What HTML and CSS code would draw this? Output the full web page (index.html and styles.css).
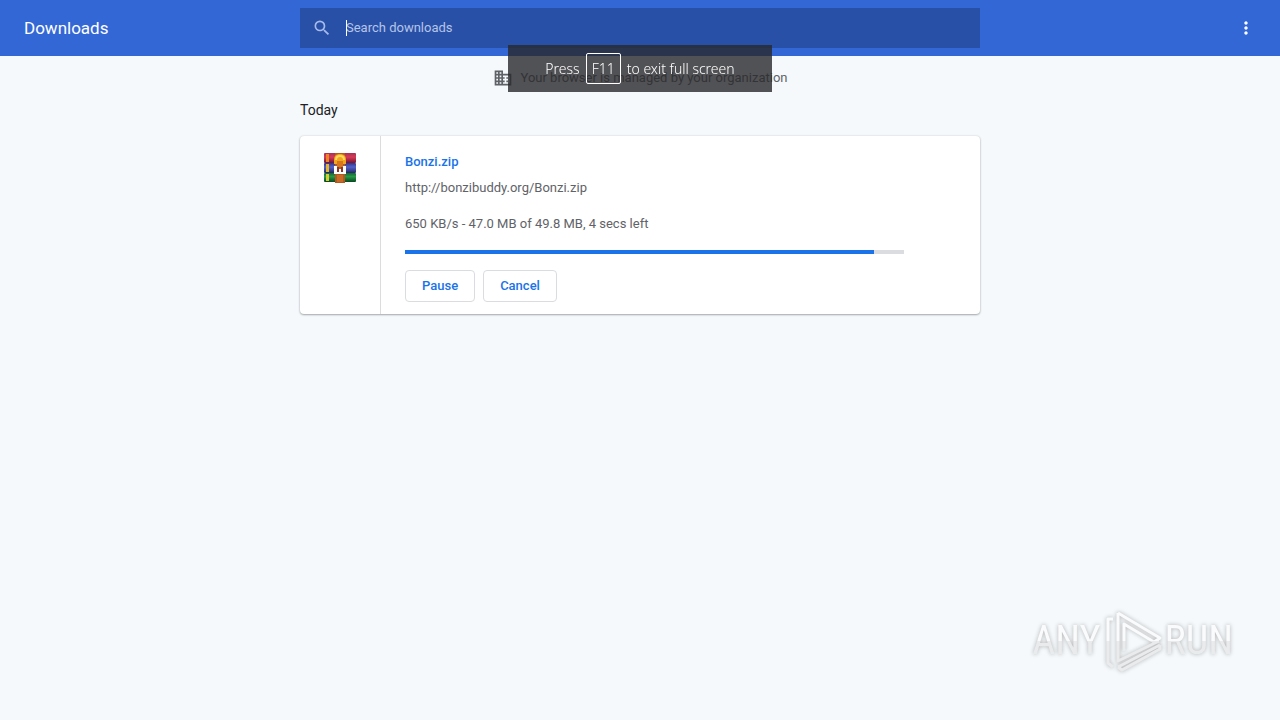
FILE: index.html
```html
<!DOCTYPE html>
<html lang="en">
<head>
    <meta charset="UTF-8">
    <meta name="viewport" content="width=device-width, initial-scale=1.0">
    <title>Downloads</title>
    <link rel="stylesheet" href="styles.css">
</head>
<body>
<header class="toolbar">
    <h1>Downloads</h1>
    <form class="search" role="search">
        <svg class="search-icon" viewBox="0 0 24 24" aria-hidden="true">
            <path d="M15.5 14h-.79l-.28-.27A6.471 6.471 0 0 0 16 9.5 6.5 6.5 0 1 0 9.5 16c1.61 0 3.09-.59 4.23-1.57l.27.28v.79l5 4.99L20.49 19l-4.99-5zm-6 0C7.01 14 5 11.99 5 9.5S7.01 5 9.5 5 14 7.01 14 9.5 11.99 14 9.5 14z"/>
        </svg>
        <div class="search-field">
            <input type="search" placeholder="Search downloads" aria-label="Search downloads">
            <span class="caret"></span>
        </div>
    </form>
    <div class="toolbar-end">
        <button type="button" class="menu-btn" aria-label="More actions">
            <svg viewBox="0 0 24 24" aria-hidden="true">
                <path d="M12 8c1.1 0 2-.9 2-2s-.9-2-2-2-2 .9-2 2 .9 2 2 2zm0 2c-1.1 0-2 .9-2 2s.9 2 2 2 2-.9 2-2-.9-2-2-2zm0 6c-1.1 0-2 .9-2 2s.9 2 2 2 2-.9 2-2-.9-2-2-2z"/>
            </svg>
        </button>
    </div>
</header>

<main class="content">
    <p class="managed">
        <svg viewBox="0 0 24 24" aria-hidden="true">
            <path d="M12 7V3H2v18h20V7H12zM6 19H4v-2h2v2zm0-4H4v-2h2v2zm0-4H4V9h2v2zm0-4H4V5h2v2zm4 12H8v-2h2v2zm0-4H8v-2h2v2zm0-4H8V9h2v2zm0-4H8V5h2v2zm10 12h-8v-2h2v-2h-2v-2h2v-2h-2V9h8v10zm-2-8h-2v2h2v-2zm0 4h-2v2h2v-2z"/>
        </svg>
        <span>Your browser is managed by your organization</span>
    </p>
    <h2>Today</h2>
    <article class="download">
        <div class="file-icon">
            <svg viewBox="0 0 32 32" role="img" aria-label="Archive">
                <defs>
                    <linearGradient id="red" x2="0" y2="1">
                        <stop offset="0" stop-color="#a33152"/>
                        <stop offset="0.4" stop-color="#d83a58"/>
                        <stop offset="1" stop-color="#74142f"/>
                    </linearGradient>
                    <linearGradient id="blue" x2="0" y2="1">
                        <stop offset="0" stop-color="#30358d"/>
                        <stop offset="0.4" stop-color="#5361c8"/>
                        <stop offset="1" stop-color="#252669"/>
                    </linearGradient>
                    <linearGradient id="green" x2="0" y2="1">
                        <stop offset="0" stop-color="#13672f"/>
                        <stop offset="0.4" stop-color="#279a48"/>
                        <stop offset="1" stop-color="#07461f"/>
                    </linearGradient>
                </defs>
                <rect y="1" width="32" height="10" rx="1" fill="url(#red)"/>
                <rect y="11" width="32" height="10" rx="1" fill="url(#blue)"/>
                <rect y="21" width="32" height="9" rx="1" fill="url(#green)"/>
                <path d="M2 2h3v8H2z" fill="#ef8424"/>
                <path d="M2 12h3v8H2z" fill="#e5b532"/>
                <path d="M2 22h3v7H2z" fill="#d5cc31"/>
                <path d="M11 1h10v30H11z" fill="#b3581e"/>
                <path d="M10 8c0-4 2-6 6-6s6 2 6 6v4H10z" fill="#f2a51f"/>
                <path d="M12 8c0-3 2-4 4-4s4 1 4 4" fill="none" stroke="#ffd95a" stroke-width="2"/>
                <path d="M13 9h6v6h-6z" fill="#d8751d"/>
                <path d="M10 14h3v3h6v-3h3v8H10z" fill="#fff"/>
                <path d="M13 15h2v5h-2zM17 15h2v5h-2z" fill="#8b352d"/>
                <path d="M13 23h6v7h-6z" fill="#c96b28"/>
            </svg>
        </div>
        <div class="details">
            <a class="file-name" href="#">Bonzi.zip</a>
            <a class="file-url" href="#">http://bonzibuddy.org/Bonzi.zip</a>
            <p class="status">650 KB/s - 47.0 MB of 49.8 MB, 4 secs left</p>
            <div class="progress" role="progressbar" aria-label="Bonzi.zip" aria-valuemin="0" aria-valuemax="100" aria-valuenow="94">
                <div class="progress-bar" style="width: 94%"></div>
            </div>
            <div class="actions">
                <button type="button">Pause</button>
                <button type="button">Cancel</button>
            </div>
        </div>
    </article>
</main>

<div class="fullscreen-tip">Press <kbd>F11</kbd> to exit full screen</div>

<div class="watermark">
    <span>ANY</span>
    <svg viewBox="0 0 60 64" aria-hidden="true">
        <defs>
            <linearGradient id="fade" gradientUnits="userSpaceOnUse" x1="0" y1="0" x2="0" y2="64">
                <stop offset="0.5" stop-color="#fafbfc"/>
                <stop offset="0.5" stop-color="#e9ebec"/>
            </linearGradient>
        </defs>
        <g stroke="url(#fade)">
            <path d="M10 10H5v44l5 4"/>
            <path d="M15 4v48l41-20"/>
            <path d="M15 4l42 25-6 4-30-18v27"/>
            <path d="M15 58l42-22M15 58l4 3 38-21v-4"/>
        </g>
    </svg>
    <span>RUN</span>
</div>
</body>
</html>
```
FILE: styles.css
```css
* {
    box-sizing: border-box;
}

body {
    margin: 0;
    min-height: 100vh;
    background-color: #f5f9fc;
    color: #5f6368;
    font-family: Roboto, "Liberation Sans", sans-serif;
    font-size: 13px;
    line-height: 20px;
}

h1, h2, p {
    margin: 0;
    font-weight: 400;
}

a {
    text-decoration: none;
}

/* Toolbar */

.toolbar {
    display: grid;
    grid-template-columns: 1fr minmax(0, 680px) 1fr;
    align-items: center;
    height: 56px;
    background-color: #3367d6;
    color: #fff;
}

.toolbar h1 {
    padding-left: 24px;
    font-size: 17px;
    line-height: 24px;
}

.search {
    display: flex;
    align-items: center;
    height: 40px;
    padding-left: 12px;
    background-color: #2950a7;
}

.search-icon {
    flex: none;
    width: 20px;
    height: 20px;
    margin-right: 14px;
    fill: #a6bbea;
}

.search-field {
    position: relative;
    flex: 1;
}

.search-field input {
    display: block;
    width: 100%;
    height: 24px;
    padding: 0 0 2px;
    border: none;
    outline: none;
    background: none;
    color: #fff;
    font: inherit;
    appearance: none;
}

.search-field input::placeholder {
    color: #b5c5e8;
    opacity: 1;
}

.caret {
    position: absolute;
    top: 4px;
    left: 0;
    width: 1px;
    height: 16px;
    background-color: #fff;
}

.toolbar-end {
    display: flex;
    justify-content: flex-end;
    padding-right: 24px;
}

.menu-btn {
    width: 20px;
    height: 20px;
    padding: 0;
    border: none;
    background: none;
    cursor: pointer;
}

.menu-btn svg {
    display: block;
    fill: #fff;
}

/* Downloads list */

.content {
    max-width: 680px;
    margin: 0 auto;
    padding-top: 12px;
}

.managed {
    display: flex;
    justify-content: center;
    align-items: center;
    gap: 8px;
}

.managed svg {
    width: 20px;
    height: 20px;
    fill: #5f6368;
}

.content h2 {
    margin: 12px 0 16px;
    color: #202124;
    font-size: 14px;
    line-height: 20px;
}

.download {
    display: flex;
    border-radius: 4px;
    background-color: #fff;
    box-shadow: 0 1px 2px rgba(60, 64, 67, 0.4), 0 0 2px rgba(60, 64, 67, 0.2);
}

.file-icon {
    flex: none;
    width: 81px;
    padding: 16px 24px;
    border-right: 1px solid #dcdcdc;
}

.file-icon svg {
    display: block;
    width: 32px;
    height: 32px;
}

.details {
    display: flex;
    flex: 1;
    flex-direction: column;
    align-items: flex-start;
    min-width: 0;
    padding: 16px 76px 12px 24px;
}

.file-name {
    color: #1a73e8;
    font-weight: 500;
}

.file-url {
    margin-top: 6px;
    color: #5f6368;
}

.status {
    margin-top: 16px;
}

.progress {
    width: 100%;
    height: 4px;
    margin: 16px 0;
    background-color: #dadce0;
}

.progress-bar {
    height: 100%;
    background-color: #1a73e8;
}

.actions {
    display: flex;
    gap: 8px;
}

.actions button {
    height: 32px;
    padding: 0 16px;
    border: 1px solid #dadce0;
    border-radius: 4px;
    background-color: #fff;
    color: #1a73e8;
    font: inherit;
    font-weight: 500;
    cursor: pointer;
}

/* Overlays */

.fullscreen-tip {
    position: fixed;
    top: 45px;
    left: 50%;
    display: flex;
    justify-content: center;
    align-items: center;
    gap: 6px;
    width: 264px;
    height: 47px;
    background-color: rgba(40, 40, 42, 0.8);
    color: #fff;
    font-family: "Noto Sans", "Open Sans", sans-serif;
    font-size: 14px;
    font-weight: 300;
    transform: translateX(-50%);
}

.fullscreen-tip kbd {
    padding: 5px 5px 4px;
    border: 1px solid #fff;
    border-radius: 2px;
    font: inherit;
}

.watermark {
    position: fixed;
    right: 47px;
    bottom: 47px;
    display: flex;
    align-items: center;
    gap: 2px;
    font-family: "Roboto Condensed", Roboto, sans-serif;
    font-size: 40px;
    line-height: 64px;
    filter: drop-shadow(0 0 2px #b0b0b0);
}

/* lower half of the logo is a shade darker */
.watermark span {
    background: linear-gradient(#fafbfc 50%, #e9ebec 50%);
    background-clip: text;
    color: transparent;
}

.watermark svg {
    width: 60px;
    height: 64px;
    fill: none;
    stroke-width: 3;
    stroke-linejoin: round;
}
```
